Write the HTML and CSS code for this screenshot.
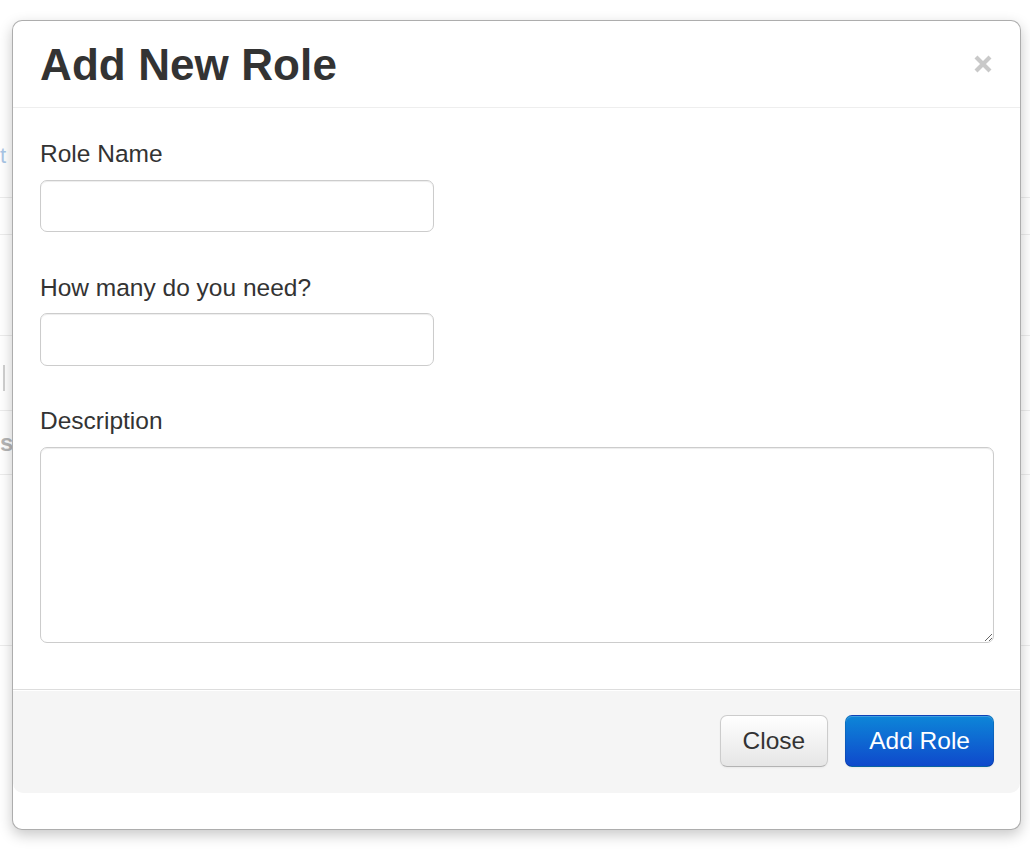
FILE: index.html
```html
<!DOCTYPE html>
<html lang="en">
<head>
<meta charset="utf-8">
<title>Add New Role</title>
<link rel="stylesheet" href="styles.css">
</head>
<body>
<div class="page">
  <div class="bg-row r1"><span class="bg-frag bg-link">t s</span></div>
  <div class="bg-row r2"></div>
  <div class="bg-row r3"></div>
  <div class="bg-row r4"><span class="bg-bar"></span></div>
  <div class="bg-row r5"><span class="bg-frag bg-strong">st</span></div>
  <div class="bg-row r6"></div>
</div>

<div class="modal">
  <div class="modal-header">
    <h3 class="modal-title">Add New Role</h3>
    <button class="close" type="button" aria-label="Close">
      <svg width="18" height="18" viewBox="0 0 18 18" aria-hidden="true">
        <path d="M2 2 L16 16 M16 2 L2 16" stroke="#c9c9c9" stroke-width="4.2" fill="none"/>
      </svg>
    </button>
  </div>
  <div class="modal-body">
    <label class="field-label" for="role-name">Role Name</label>
    <input class="field-input" id="role-name" type="text">
    <label class="field-label" for="role-count">How many do you need?</label>
    <input class="field-input" id="role-count" type="text">
    <label class="field-label" for="role-desc">Description</label>
    <textarea class="field-textarea" id="role-desc"></textarea>
  </div>
  <div class="modal-footer">
    <button class="btn" type="button">Close</button>
    <button class="btn btn-primary" type="button">Add Role</button>
  </div>
</div>
</body>
</html>
```

FILE: styles.css
```css
html, body {
  margin: 0;
  padding: 0;
  background: #ffffff;
}

body {
  font-family: "Liberation Sans", Helvetica, Arial, sans-serif;
  color: #333333;
  width: 1030px;
  height: 854px;
  overflow: hidden;
  position: relative;
}

/* background page, mostly hidden behind the modal */
.page {
  width: 1030px;
}

.bg-row {
  border-bottom: 1px solid #ececec;
  display: flex;
  align-items: center;
}

.r1 { height: 197px; align-items: flex-end; }
.r2 { height: 36px; }
.r3 { height: 100px; }
.r4 { height: 74px; }
.r5 { height: 63px; }
.r6 { height: 170px; }

.bg-frag {
  display: block;
  white-space: nowrap;
}

.bg-link {
  color: #a9c6e6;
  font-size: 22px;
  margin-bottom: 28px;
}

.bg-bar {
  display: block;
  width: 2px;
  height: 26px;
  background: #d0d0d0;
  margin-left: 3px;
  margin-top: 10px;
}

.bg-strong {
  color: #b5b5b5;
  font-weight: bold;
  font-size: 24px;
}

/* modal */
.modal {
  position: absolute;
  left: 12px;
  top: 20px;
  width: 1009px;
  height: 810px;
  box-sizing: border-box;
  background: #ffffff;
  border: 1px solid rgba(0, 0, 0, 0.32);
  border-radius: 10px;
  box-shadow: 0 5px 14px rgba(0, 0, 0, 0.22);
  display: flex;
  flex-direction: column;
}

.modal-header {
  display: flex;
  align-items: center;
  justify-content: space-between;
  padding: 19px 28px 17px 27px;
  border-bottom: 1px solid #eeeeee;
}

.modal-title {
  margin: 0;
  font-size: 44px;
  line-height: 50px;
  font-weight: bold;
  color: #333333;
  letter-spacing: 0.1px;
}

.close {
  border: 0;
  background: transparent;
  padding: 0;
  margin: 0 0 2px 0;
  width: 18px;
  height: 18px;
  display: block;
  cursor: pointer;
}

.close svg {
  display: block;
}

.modal-body {
  padding: 28px 26px 46px 27px;
  display: flex;
  flex-direction: column;
  align-items: flex-start;
}

.field-label {
  display: block;
  font-size: 24.5px;
  line-height: 35px;
  margin-bottom: 8.5px;
  color: #333333;
}

.field-input,
.field-textarea {
  box-sizing: border-box;
  border: 1px solid #cccccc;
  border-radius: 7px;
  background: #ffffff;
  box-shadow: inset 0 1px 1px rgba(0, 0, 0, 0.075);
  font-family: inherit;
  font-size: 24.5px;
  color: #555555;
  padding: 7px 10px;
  margin: 0;
  outline: none;
}

.field-input {
  width: 394px;
  height: 52.5px;
  margin-bottom: 37.5px;
}

.field-textarea {
  width: 954px;
  height: 196px;
  resize: both;
}

.modal-footer {
  display: flex;
  justify-content: flex-end;
  gap: 17px;
  padding: 25px 26px 26px 26px;
  background: #f5f5f5;
  border-top: 1px solid #dddddd;
  box-shadow: inset 0 1px 0 #ffffff;
  border-radius: 0 0 10px 10px;
}

.btn {
  box-sizing: border-box;
  height: 52px;
  padding: 0 22px;
  font-family: inherit;
  font-size: 24.5px;
  line-height: 50px;
  color: #333333;
  background: linear-gradient(#ffffff, #e6e6e6);
  border: 1px solid #cccccc;
  border-bottom-color: #b3b3b3;
  border-radius: 7px;
  box-shadow: inset 0 1px 0 rgba(255, 255, 255, 0.2), 0 1px 2px rgba(0, 0, 0, 0.05);
  cursor: pointer;
}

.btn-primary {
  color: #ffffff;
  padding: 0 23px;
  background: linear-gradient(#0d86d8, #0f49cc);
  border-color: rgba(0, 0, 0, 0.1) rgba(0, 0, 0, 0.1) rgba(0, 0, 0, 0.25);
}
```
